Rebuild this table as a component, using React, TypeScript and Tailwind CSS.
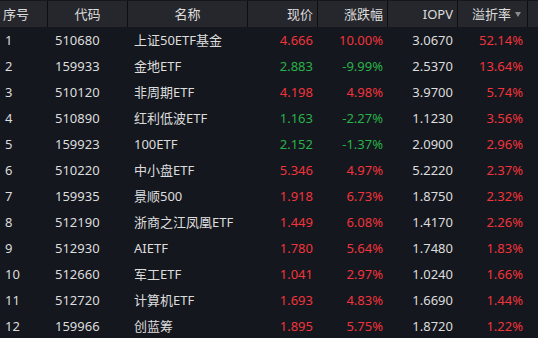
import React from 'react';

type Row = {
  code: string;
  name: string;
  price: string;
  change: string;
  iopv: string;
  premium: string;
};

const rows: Row[] = [
  { code: '510680', name: '上证50ETF基金', price: '4.666', change: '10.00%', iopv: '3.0670', premium: '52.14%' },
  { code: '159933', name: '金地ETF', price: '2.883', change: '-9.99%', iopv: '2.5370', premium: '13.64%' },
  { code: '510120', name: '非周期ETF', price: '4.198', change: '4.98%', iopv: '3.9700', premium: '5.74%' },
  { code: '510890', name: '红利低波ETF', price: '1.163', change: '-2.27%', iopv: '1.1230', premium: '3.56%' },
  { code: '159923', name: '100ETF', price: '2.152', change: '-1.37%', iopv: '2.0900', premium: '2.96%' },
  { code: '510220', name: '中小盘ETF', price: '5.346', change: '4.97%', iopv: '5.2220', premium: '2.37%' },
  { code: '159935', name: '景顺500', price: '1.918', change: '6.73%', iopv: '1.8750', premium: '2.32%' },
  { code: '512190', name: '浙商之江凤凰ETF', price: '1.449', change: '6.08%', iopv: '1.4170', premium: '2.26%' },
  { code: '512930', name: 'AIETF', price: '1.780', change: '5.64%', iopv: '1.7480', premium: '1.83%' },
  { code: '512660', name: '军工ETF', price: '1.041', change: '2.97%', iopv: '1.0240', premium: '1.66%' },
  { code: '512720', name: '计算机ETF', price: '1.693', change: '4.83%', iopv: '1.6690', premium: '1.44%' },
  { code: '159966', name: '创蓝筹', price: '1.895', change: '5.75%', iopv: '1.8720', premium: '1.22%' },
];

const cols = 'grid grid-cols-[48px_80px_120px_70px_70px_70px_70px_10px]';

const App: React.FC = () => {
  return (
    <div
      className="w-[538px] h-[338px] overflow-hidden bg-[#14171d] text-[13px] text-[#dddddd]"
      style={{ fontFamily: '"Noto Sans", "Noto Sans CJK SC", sans-serif' }}
    >
      {/* header */}
      <div className={`${cols} h-[27px] border-t border-[#15171c] bg-[#26272c] leading-[26px]`}>
        <div className="pl-[3px] border-r border-[#0e0e10]">序号</div>
        <div className="text-center border-r border-[#0e0e10]">代码</div>
        <div className="text-center border-r border-[#0e0e10]">名称</div>
        <div className="text-right pr-[4px] border-r border-[#0e0e10]">现价</div>
        <div className="text-right pr-[4px] border-r border-[#0e0e10]">涨跌幅</div>
        <div className="text-right pr-[4px] border-r border-[#0e0e10]">IOPV</div>
        <div className="flex items-center justify-end pr-[6px] border-r border-[#0e0e10]">
          <span>溢折率</span>
          <span className="ml-[4px] w-0 h-0 border-l-[3px] border-r-[3px] border-t-[5px] border-l-transparent border-r-transparent border-t-[#8a8a8e]" />
        </div>
        <div />
      </div>

      {rows.map((r, i) => {
        const up = !r.change.startsWith('-');
        const color = up ? 'text-[#f0343c]' : 'text-[#2ab24a]';
        return (
          <div key={r.code} className={`${cols} h-[26px] leading-[26px]`}>
            <div className="pl-[5px]">{i + 1}</div>
            <div className="pl-[7px]">{r.code}</div>
            <div className="pl-[6px] whitespace-nowrap">{r.name}</div>
            <div className={`text-right pr-[5px] ${color}`}>{r.price}</div>
            <div className={`text-right pr-[5px] ${color}`}>{r.change}</div>
            <div className="text-right pr-[5px]">{r.iopv}</div>
            <div className="text-right pr-[5px] text-[#f0343c]">{r.premium}</div>
            <div />
          </div>
        );
      })}
    </div>
  );
};

export default App;
